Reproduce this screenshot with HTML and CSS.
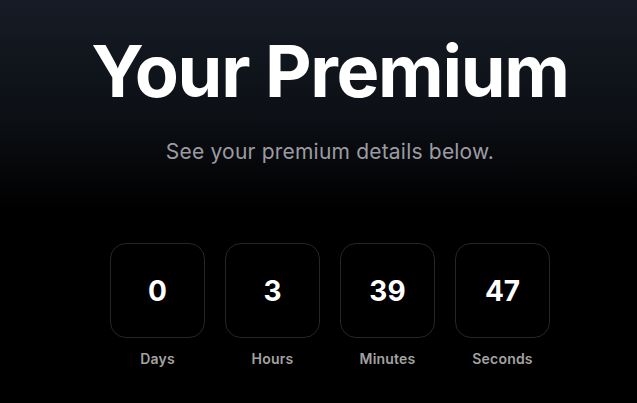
FILE: index.html
```html
<!DOCTYPE html>
<html lang="en">
<head>
  <meta charset="UTF-8" />
  <meta name="viewport" content="width=device-width, initial-scale=1" />
  <title>Your Premium</title>
  <link rel="stylesheet" href="styles.css">
</head>
<body>
  <main class="premium">
    <h1 class="premium-title">Your Premium</h1>
    <p class="premium-subtitle">See your premium details below.</p>

    <!-- Time left on the subscription -->
    <div class="countdown">
      <div class="unit">
        <div class="unit-box">0</div>
        <span class="unit-label">Days</span>
      </div>
      <div class="unit">
        <div class="unit-box">3</div>
        <span class="unit-label">Hours</span>
      </div>
      <div class="unit">
        <div class="unit-box">39</div>
        <span class="unit-label">Minutes</span>
      </div>
      <div class="unit">
        <div class="unit-box">47</div>
        <span class="unit-label">Seconds</span>
      </div>
    </div>
  </main>
</body>
</html>
```

FILE: styles.css
```css
html, body {
  height: 100%;
}
body {
  margin: 0;
  font-family: Inter, "Noto Sans", sans-serif;
  background: linear-gradient(to bottom, #161c26 0px, #0c0f14 120px, #000 210px, #000 100%);
  color: #fff;
  overflow: hidden;
}
.premium {
  display: flex;
  flex-direction: column;
  align-items: center;
  padding: 35px 0 0 23px;
}
.premium-title {
  margin: 0;
  font-size: 72px;
  line-height: 1;
  font-weight: 700;
  letter-spacing: -1.3px;
}
.premium-subtitle {
  margin: 31px 0 0;
  font-size: 21px;
  line-height: 28px;
  letter-spacing: 0.2px;
  color: #9b9ca3;
}
.countdown {
  display: flex;
  gap: 20px;
  margin-top: 77px;
}
.unit {
  display: flex;
  flex-direction: column;
  align-items: center;
}
.unit-box {
  width: 93px;
  height: 93px;
  border: 1px solid #262626;
  border-radius: 16px;
  background: #000;
  display: flex;
  align-items: center;
  justify-content: center;
  font-size: 28px;
  font-weight: 700;
}
.unit-label {
  margin-top: 11px;
  font-size: 14px;
  line-height: 20px;
  font-weight: 600;
  letter-spacing: 0.2px;
  color: #a3a3a3;
}
```
